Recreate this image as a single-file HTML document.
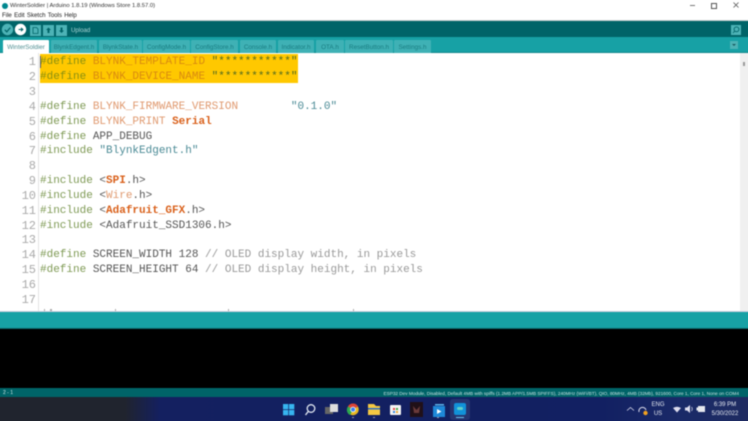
<!DOCTYPE html>
<html><head><meta charset="utf-8">
<style>
html,body{margin:0;padding:0;background:#fff}
#w{position:relative;width:748px;height:421px;overflow:hidden;background:#fff}
#p{position:absolute;left:0;top:0;width:748px;height:421px;font-family:"Liberation Sans",sans-serif;filter:blur(.45px)}
.a{position:absolute}
.f{position:absolute;left:-10px;width:770px}
.t{position:absolute;white-space:nowrap}
.tab{position:absolute;top:40px;height:13px;background:#3fb1b5;color:#1a7d82;font-size:6.3px;line-height:15px;text-align:center;border-radius:1px 1px 0 0}
.l{position:absolute;left:40px;white-space:pre;font:11px/15px "Liberation Mono",monospace;color:#555}
.n{position:absolute;width:36px;left:0;text-align:right;font:12px/15px "Liberation Mono",monospace;color:#aaa}
.k{color:#7f9a55}.o{color:#e09a70}.y{color:#d98a10}.yk{color:#8a9010}.b{color:#d9601a;font-weight:bold}.s{color:#4a8a95}.ys{color:#4f6a20}.c{color:#999}
.ib{position:absolute;top:25px;width:11px;height:11px;background:#4db3b6;}
</style></head><body>
<div id="w"><div id="p">
<!-- title -->
<div class="f" style="top:-10px;height:30px;background:#fff"></div>
<div class="a" style="left:2px;top:3px;width:6px;height:6px;border-radius:50%;background:#00878f"></div>
<div class="t" style="left:10px;top:1px;font-size:5.85px;line-height:10px;color:#333">WinterSoldier | Arduino 1.8.19 (Windows Store 1.8.57.0)</div>
<div class="t" style="left:2px;top:11px;font-size:6.1px;line-height:10px;color:#222;word-spacing:.6px">File Edit Sketch Tools Help</div>
<div class="a" style="left:690px;top:5px;width:5px;height:1px;background:#777"></div>
<div class="a" style="left:711px;top:3px;width:4px;height:4px;border:1px solid #555"></div>
<svg class="a" style="left:732px;top:1px" width="8" height="8"><path d="M1.5 1.5L6.5 6.5M6.5 1.5L1.5 6.5" stroke="#555" stroke-width=".8"/></svg>
<!-- toolbar -->
<div class="f" style="top:20px;height:1px;background:#c6cccc"></div>
<div class="f" style="top:21px;height:16px;background:#006468"></div>
<svg class="a" style="left:1px;top:23px" width="26" height="13">
<circle cx="6.5" cy="6.5" r="5.7" fill="#4db3b6"/><path d="M3.8 6.8L5.8 8.8L9.3 4.6" fill="none" stroke="#006468" stroke-width="1.2"/>
<circle cx="19.5" cy="6.5" r="5.7" fill="#fff"/><path d="M17.6 6.5H21.4M20 4.9L21.8 6.5L20 8.1" fill="none" stroke="#006468" stroke-width="1.1"/>
</svg>
<div class="ib" style="left:30px"></div><div class="ib" style="left:43px"></div><div class="ib" style="left:56px"></div>
<svg class="a" style="left:30px;top:25px" width="38" height="11">
<path d="M3 2.5H6.5L8 4V8.5H3Z" fill="none" stroke="#006468" stroke-width=".8"/>
<path d="M18.5 2.5L21 5H19.5V8H17.5V5H16Z" fill="#006468"/>
<path d="M30.5 2.5H32.5V5.5H34L31.5 8L29 5.5H30.5Z" fill="#006468"/>
</svg>
<div class="t" style="left:71px;top:26px;font-size:6.1px;line-height:10px;color:#a8d4d4">Upload</div>
<div class="a" style="left:731px;top:25px;width:10px;height:10px;background:#4db3b6"></div>
<svg class="a" style="left:731px;top:25px" width="10" height="10"><circle cx="5.5" cy="4.3" r="2.4" fill="none" stroke="#006468" stroke-width=".9"/><path d="M3.8 6L2 8" stroke="#006468" stroke-width=".9"/></svg>
<!-- tabs -->
<div class="f" style="top:37px;height:16px;background:#17a1a5"></div>
<div class="f" style="top:52px;height:1px;background:#14898d"></div>
<div class="tab" style="left:3px;width:46px;background:#fff;color:#4f8f92">WinterSoldier</div>
<div class="tab" style="left:51px;width:46px">BlynkEdgent.h</div>
<div class="tab" style="left:99px;width:43px">BlynkState.h</div>
<div class="tab" style="left:143px;width:47px">ConfigMode.h</div>
<div class="tab" style="left:191px;width:47px">ConfigStore.h</div>
<div class="tab" style="left:240px;width:36px">Console.h</div>
<div class="tab" style="left:278px;width:36px">Indicator.h</div>
<div class="tab" style="left:316px;width:28px">OTA.h</div>
<div class="tab" style="left:345px;width:48px">ResetButton.h</div>
<div class="tab" style="left:394px;width:37px">Settings.h</div>
<div class="a" style="left:730px;top:41px;width:8px;height:8px;background:#4db3b6"></div>
<div class="a" style="left:732px;top:44px;width:0;height:0;border-left:2.5px solid transparent;border-right:2.5px solid transparent;border-top:2.5px solid #17595d"></div>
<!-- editor -->
<div class="f" style="top:53px;height:258px;background:#fff"></div>
<div class="a" style="left:38px;top:53px;width:1px;height:258px;background:#e4e4e4"></div>
<div class="a" style="left:40px;top:54px;width:258px;height:29px;background:#ffc800"></div>
<div class="a" style="left:40px;top:56px;width:1px;height:12px;background:#555"></div>
<div class="a" style="left:740px;top:53px;width:18px;height:258px;background:#f0f0f0"></div>
<div class="a" style="left:743px;top:62px;width:2px;height:4px;background:#999"></div>

<div class="n" style="top:55px">1</div><div class="n" style="top:70px">2</div><div class="n" style="top:85px">3</div>
<div class="n" style="top:100px">4</div><div class="n" style="top:115px">5</div><div class="n" style="top:130px">6</div>
<div class="n" style="top:144px">7</div><div class="n" style="top:159px">8</div><div class="n" style="top:174px">9</div>
<div class="n" style="top:189px">10</div><div class="n" style="top:204px">11</div><div class="n" style="top:219px">12</div>
<div class="n" style="top:233px">13</div><div class="n" style="top:248px">14</div><div class="n" style="top:263px">15</div>
<div class="n" style="top:278px">16</div><div class="n" style="top:293px">17</div>

<div class="l" style="top:55px"><span class="yk">#define</span> <span class="y">BLYNK_TEMPLATE_ID</span> <span class="ys">"***********"</span></div>
<div class="l" style="top:70px"><span class="yk">#define</span> <span class="y">BLYNK_DEVICE_NAME</span> <span class="ys">"***********"</span></div>
<div class="l" style="top:100px"><span class="k">#define</span> <span class="o">BLYNK_FIRMWARE_VERSION</span>        <span class="s">"0.1.0"</span></div>
<div class="l" style="top:115px"><span class="k">#define</span> <span class="o">BLYNK_PRINT</span> <span class="b">Serial</span></div>
<div class="l" style="top:130px"><span class="k">#define</span> APP_DEBUG</div>
<div class="l" style="top:144px"><span class="k">#include</span> <span class="s">"BlynkEdgent.h"</span></div>
<div class="l" style="top:174px"><span class="k">#include</span> &lt;<span class="b">SPI</span>.h&gt;</div>
<div class="l" style="top:189px"><span class="k">#include</span> &lt;<span class="o">Wire</span>.h&gt;</div>
<div class="l" style="top:204px"><span class="k">#include</span> &lt;<span class="b">Adafruit_GFX</span>.h&gt;</div>
<div class="l" style="top:219px"><span class="k">#include</span> &lt;Adafruit_SSD1306.h&gt;</div>
<div class="l" style="top:248px"><span class="k">#define</span> SCREEN_WIDTH 128 <span class="c">// OLED display width, in pixels</span></div>
<div class="l" style="top:263px"><span class="k">#define</span> SCREEN_HEIGHT 64 <span class="c">// OLED display height, in pixels</span></div>
<div class="a" style="left:44px;top:309px;width:1px;height:2px;background:#aaa"></div>
<div class="a" style="left:50px;top:309px;width:2px;height:2px;background:#aaa"></div>
<div class="a" style="left:115px;top:309px;width:1px;height:2px;background:#aaa"></div>
<div class="a" style="left:228px;top:309px;width:1px;height:2px;background:#aaa"></div>
<div class="a" style="left:353px;top:309px;width:1px;height:2px;background:#aaa"></div>

<!-- bottom bands -->
<div class="f" style="top:311px;height:1px;background:#ccd"></div>
<div class="f" style="top:312px;height:16px;background:#17a1a5"></div>
<div class="f" style="top:328px;height:1px;background:#0b6468"></div>
<div class="f" style="top:329px;height:59px;background:#000"></div>
<div class="f" style="top:388px;height:9px;background:#006468"></div>
<div class="t" style="left:3px;top:389px;font-size:5px;line-height:8px;color:#d5eaea">2 - 1</div>
<div class="t" style="right:9px;top:389.5px;font-size:4.68px;line-height:8px;color:#c6e2e2">ESP32 Dev Module, Disabled, Default 4MB with spiffs (1.2MB APP/1.5MB SPIFFS), 240MHz (WiFi/BT), QIO, 80MHz, 4MB (32Mb), 921600, Core 1, Core 1, None on COM4</div>
<!-- taskbar -->
<div class="f" style="top:397px;height:34px;background:linear-gradient(90deg,#20242e 0,#20242e 135px,#142060 170px,#122062 610px,#1a2a68 690px,#202c60 770px)"></div>
<div class="a" style="left:450px;top:399px;width:20px;height:21px;background:#25346f;border-radius:3px"></div>
<svg class="a" style="left:280px;top:401px" width="170" height="20">
<g fill="#37b5f0"><rect x="3" y="3" width="5.3" height="5.3"/><rect x="9" y="3" width="5.3" height="5.3"/><rect x="3" y="9" width="5.3" height="5.3"/><rect x="9" y="9" width="5.3" height="5.3"/></g>
<circle cx="31" cy="7.5" r="3.8" fill="none" stroke="#dfe6f0" stroke-width="1.3"/><path d="M28.2 10.5L25.5 14" stroke="#dfe6f0" stroke-width="1.4"/>
<rect x="45" y="6" width="8" height="7" fill="#666"/><rect x="50" y="3" width="8" height="8" fill="#ddd"/>
<circle cx="73" cy="8.5" r="5.7" fill="#e8b923"/><path d="M73 8.5L68 5.5A5.7 5.7 0 0 1 78 5.5Z" fill="#dc4437"/><path d="M73 8.5L70 14A5.7 5.7 0 0 1 68 5.5Z" fill="#2da94f"/><circle cx="73" cy="8.5" r="2.4" fill="#3b7ff0" stroke="#fff" stroke-width=".8"/>
<path d="M88 3H94L96 5H100V14H88Z" fill="#f5c842"/><rect x="88" y="7" width="12" height="1.5" fill="#2f6fc0"/>
<rect x="110" y="4" width="11" height="10" rx="1" fill="#f4f4f4"/><rect x="113" y="7" width="2" height="2" fill="#e44"/><rect x="116" y="7" width="2" height="2" fill="#4a4"/><rect x="113" y="10" width="2" height="2" fill="#38d"/><rect x="116" y="10" width="2" height="2" fill="#ea3"/>
<rect x="130" y="1" width="13" height="15" fill="#201018"/><path d="M133 5L136.5 9L140 5L139 12H134Z" fill="#6a3a3a"/>
<rect x="153" y="5" width="12" height="11" fill="#1e88d8"/><path d="M157 8L161.5 10.5L157 13Z" fill="#fff"/><rect x="155" y="3" width="9" height="1.5" fill="#5ab0e8"/>
</svg>
<div class="a" style="left:454px;top:403px;width:12px;height:12px;background:#1192d8;border-radius:2px"></div>
<div class="a" style="left:457px;top:407px;width:6px;height:3px;border-radius:2px;background:#5fd0c8"></div>
<div class="a" style="left:456px;top:417px;width:8px;height:1px;background:#6cc4f0"></div>
<div class="a" style="left:352px;top:417px;width:2px;height:1px;background:#99a"></div>
<div class="a" style="left:373px;top:417px;width:2px;height:1px;background:#99a"></div>
<div class="a" style="left:437px;top:417px;width:2px;height:1px;background:#99a"></div>
<svg class="a" style="left:625px;top:403px" width="60" height="14">
<path d="M2 7.5L5.5 4.5L9 7.5" fill="none" stroke="#dde" stroke-width=".8"/>
<path d="M14 9A3.5 3.5 0 0 1 21 7" fill="none" stroke="#dde" stroke-width="1"/><circle cx="20.5" cy="10" r="2.2" fill="#f0a020"/>
<path d="M48 5Q52 2.5 56 5L52 9.5Z" fill="#dde"/>
</svg>
<div class="t" style="left:651px;top:401px;width:14px;text-align:center;font-size:6px;line-height:8.5px;color:#e4e8f0">ENG<br>US</div>
<svg class="a" style="left:683px;top:403px" width="24" height="12">
<path d="M2 4.5H4L7 2V10L4 7.5H2Z" fill="#dde"/><path d="M8.5 4Q10 6 8.5 8" fill="none" stroke="#dde" stroke-width=".7"/>
<rect x="15" y="3" width="7" height="6" fill="#e6e8ee"/><rect x="13.5" y="4.5" width="2" height="3" fill="#e6e8ee"/>
</svg>
<div class="t" style="left:710px;top:401px;width:30px;text-align:center;font-size:6px;line-height:8.5px;color:#e4e8f0">6:39 PM<br>5/30/2022</div>
</div></div>
</body></html>
